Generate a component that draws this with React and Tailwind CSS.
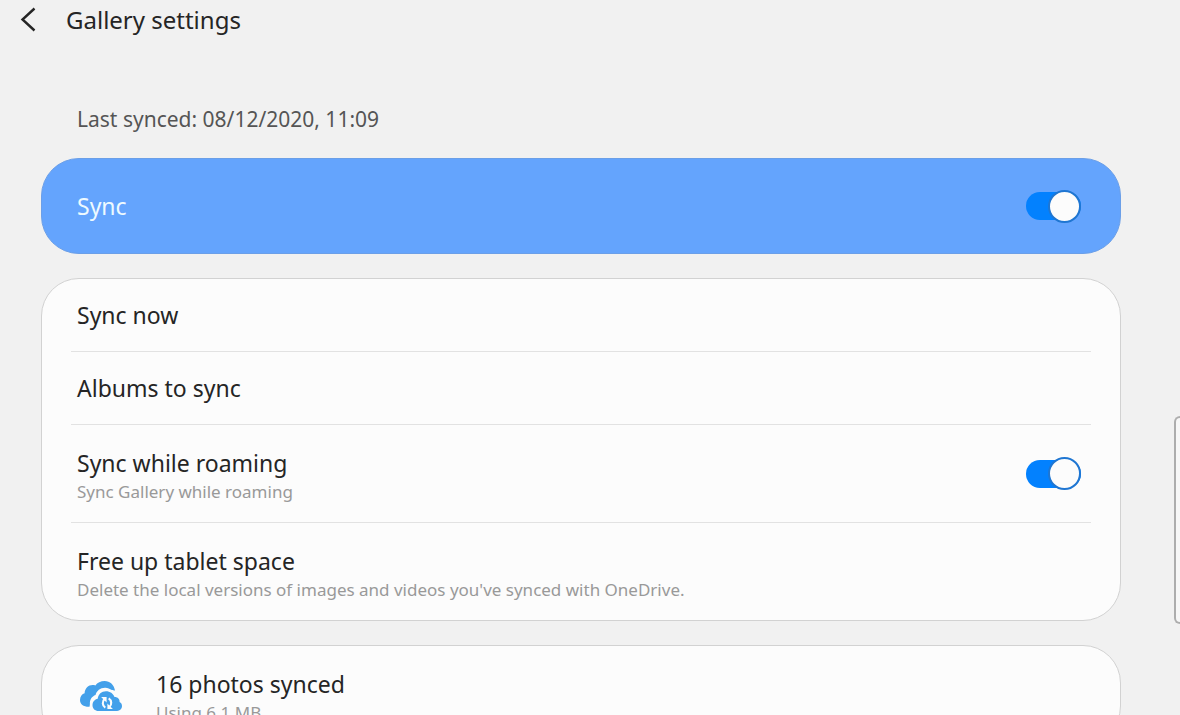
import { useState } from "react";

function Toggle({ id, defaultChecked }) {
  const [on, setOn] = useState(defaultChecked);
  return (
    <input
      id={id}
      type="checkbox"
      role="switch"
      checked={on}
      onChange={(e) => setOn(e.target.checked)}
      className="flex h-7 w-[55px] shrink-0 cursor-pointer appearance-none items-center justify-start rounded-full bg-[#b5b5b5] before:size-[33px] before:shrink-0 before:rounded-full before:border-2 before:border-[#8c8c8c] before:bg-[#fcfcfc] before:content-[''] checked:justify-end checked:bg-[#0381fe] checked:before:border-[#1f76d2]"
    />
  );
}

function RowText({ title, detail }) {
  return (
    <>
      <span className="block text-[23px] leading-8 text-[#252525]">{title}</span>
      {detail && (
        <span className="block text-[17px] leading-[25px] text-[#999999]">
          {detail}
        </span>
      )}
    </>
  );
}

function CloudSyncIcon() {
  return (
    <svg viewBox="0 0 42 32" className="h-8 w-[42px]" aria-hidden="true">
      <path
        fill="#43a0ea"
        d="M9.500 25.800C3.500 26 0 23.200 0 19c0-3.600 2.200-6 4.600-6.700C4.800 7.500 8.300 4 12.600 4c1 0 1.900.1 2.800.5C17.300 1.600 20.700 0 24.700 0c5.200 0 9.300 3.500 10.300 9.600-1.300-.2-2.200-.1-3.200-.5C29.800 7.500 27.500 6.600 25 6.700c-4.900.2-8.300 3-9.500 7.200-3.700 1.400-5.700 4.700-5.600 8.400 0 1.300 0 2.400-.4 3.500z"
      />
      <path
        fill="#43a0ea"
        d="M18.500 30c-3.500 0-6-2.400-6-5.800 0-3.300 2.200-5.900 5.200-6.400.5-4.500 3.800-7.600 8.300-7.600 4 0 7.300 2.300 8.500 5.800 3.300-.1 5.300 2.200 5.100 5 1.500.7 2.400 2.200 2.400 4.100 0 2.900-2.100 4.900-4.900 4.900z"
      />
      <g fill="none" stroke="#fcfcfc" strokeWidth="2.100">
        <path d="M25.300 26.700c-3.200-2-3.300-6.500-.6-8.800" />
        <path d="M28.700 17.300c3.200 2 3.300 6.500.6 8.800" />
      </g>
      <path fill="#fcfcfc" d="M21.100 16h5.500v5.500zM32.900 28h-5.500v-5.500z" />
    </svg>
  );
}

const cardClass = "rounded-[38px] border border-[#d2d2d2] bg-[#fcfcfc]";

export default function App() {
  return (
    <div className="relative h-screen overflow-hidden bg-[#f1f1f1] font-['Noto_Sans',sans-serif]">
      <header className="flex h-10 items-center gap-[26px] pl-4">
        <button type="button" aria-label="Back" className="flex w-6 justify-center">
          <svg
            viewBox="0 0 16 26"
            className="h-[26px] w-4"
            fill="none"
            stroke="#252525"
            strokeWidth="2.400"
            aria-hidden="true"
          >
            <path d="M14.500 1.500 2.500 12.500l12 11" />
          </svg>
        </button>
        <h1 className="text-2xl leading-8 text-[#252525]">Gallery settings</h1>
      </header>

      <main className="flex flex-col gap-6 pr-[59px] pl-[41px] pt-16">
        <p className="px-9 text-[21px] leading-[30px] text-[#555555]">
          Last synced: 08/12/2020, 11:09
        </p>

        <section className="flex h-24 items-center justify-between rounded-[38px] border border-[#6b9fe8] bg-[#64a4fd] pr-[39px] pl-[35px]">
          <label htmlFor="sync" className="text-[23px] leading-8 text-[#eefaff]">
            Sync
          </label>
          <Toggle id="sync" defaultChecked />
        </section>

        <section className={cardClass}>
          <div className="mx-[29px] divide-y divide-[#e2e2e2]">
            <button type="button" className="block w-full px-1.5 py-5 text-left">
              <RowText title="Sync now" />
            </button>
            <button type="button" className="block w-full px-1.5 py-5 text-left">
              <RowText title="Albums to sync" />
            </button>
            <div className="flex items-center justify-between pr-2.5 pl-1.5">
              <label htmlFor="roaming" className="pt-[22px] pb-[18px]">
                <RowText
                  title="Sync while roaming"
                  detail="Sync Gallery while roaming"
                />
              </label>
              <Toggle id="roaming" defaultChecked />
            </div>
            <button
              type="button"
              className="block w-full px-1.5 pt-[22px] pb-[18px] text-left"
            >
              <RowText
                title="Free up tablet space"
                detail="Delete the local versions of images and videos you've synced with OneDrive."
              />
            </button>
          </div>
        </section>

        <section className={cardClass}>
          <div className="flex items-center gap-[34px] px-[38px] pt-[22px] pb-[18px]">
            <CloudSyncIcon />
            <div>
              <RowText title="16 photos synced" detail="Using 6.1 MB" />
            </div>
          </div>
        </section>
      </main>

      <div className="absolute top-[416px] right-0 h-52 w-1.5 rounded-l-lg border-2 border-r-0 border-[#adadad] bg-[#f7f7f7]" />
    </div>
  );
}
